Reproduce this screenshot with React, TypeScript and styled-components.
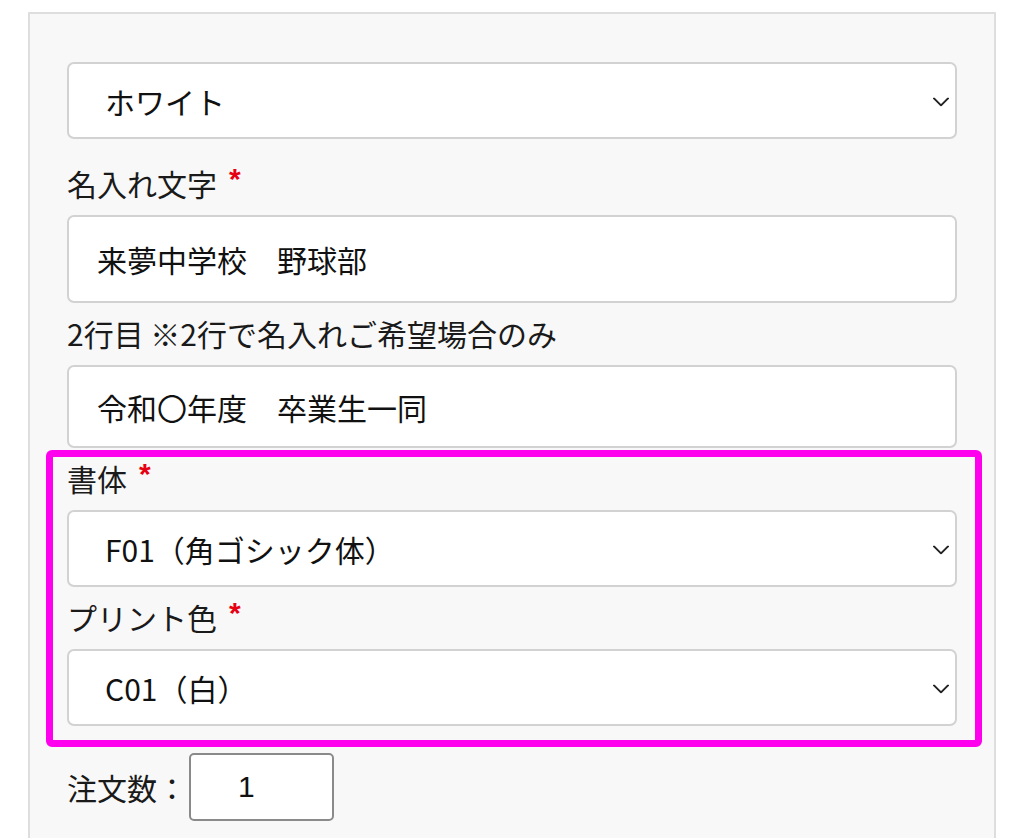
import * as React from "react";
import styled, { createGlobalStyle } from "styled-components";

//styles
const GlobalStyle = createGlobalStyle`
  html, body {
    margin: 0;
    padding: 0;
    background: #ffffff;
    font-family: "Noto Sans CJK JP", "Noto Sans", sans-serif;
    color: #222222;
  }
`;

type FieldProps = {
  label: string;
  required?: boolean;
};

const Chevron = () => (
  <svg width="16" height="9" viewBox="0 0 16 9" fill="none">
    <path
      d="M1 1l7 7 7-7"
      stroke="#222"
      strokeWidth="2"
      strokeLinecap="round"
      strokeLinejoin="round"
    />
  </svg>
);

const Label: React.FC<FieldProps> = ({ label, required }) => (
  <LabelText>
    {label}
    {required && <Required>*</Required>}
  </LabelText>
);

const Select: React.FC<{ value: string; spaced?: boolean }> = ({
  value,
  spaced,
}) => (
  <SelectWrap $spaced={spaced}>
    <SelectBox defaultValue={value}>
      <option value={value}>{value}</option>
    </SelectBox>
    <ChevronSlot>
      <Chevron />
    </ChevronSlot>
  </SelectWrap>
);

const App: React.FC = () => {
  return (
    <Page>
      <GlobalStyle />
      <Panel>
        <Select value="ホワイト" spaced />

        <Label label="名入れ文字" required />
        <TextInput defaultValue="来夢中学校　野球部" $height={88} />

        <Label label="2行目 ※2行で名入れご希望場合のみ" />
        <TextInput defaultValue="令和〇年度　卒業生一同" $height={83} />

        <Highlight>
          <Label label="書体" required />
          <Select value="F01（角ゴシック体）" />

          <Label label="プリント色" required />
          <Select value="C01（白）" />
        </Highlight>

        <QuantityRow>
          <span>注文数：</span>
          <Quantity defaultValue="1" />
        </QuantityRow>
      </Panel>
    </Page>
  );
};

const Page = styled.div`
  padding: 12px 0 0 28px;
  height: 826px;
  overflow: hidden;
`;

const Panel = styled.div`
  width: 968px;
  min-height: 900px;
  box-sizing: border-box;
  border: 2px solid #dedede;
  border-bottom: none;
  background: #f8f8f8;
  padding: 48px 37px 0;
  display: flex;
  flex-direction: column;
`;

const LabelText = styled.div`
  font-size: 30px;
  line-height: 42px;
  padding: 9px 0 11px;
  color: #1a1a1a;
  display: flex;
  align-items: flex-start;
`;

const Required = styled.span`
  color: #e60012;
  font-family: "Liberation Sans", Arial, sans-serif;
  font-size: 30px;
  font-weight: 700;
  line-height: 30px;
  margin: 2px 0 0 12px;
`;

const SelectWrap = styled.div<{ $spaced?: boolean }>`
  position: relative;
  height: 77px;
  margin-bottom: ${(p) => (p.$spaced ? "14px" : "0")};
`;

const SelectBox = styled.select`
  appearance: none;
  width: 100%;
  height: 100%;
  box-sizing: border-box;
  border: 2px solid #d2d2d2;
  border-radius: 7px;
  background: #ffffff;
  padding: 0 60px 0 36px;
  font-family: "Noto Sans CJK JP", sans-serif;
  font-size: 30px;
  color: #111;
  outline: none;
`;

const ChevronSlot = styled.span`
  position: absolute;
  right: 8px;
  top: 50%;
  transform: translateY(-40%);
  display: flex;
  pointer-events: none;
`;

const TextInput = styled.input<{ $height: number }>`
  width: 100%;
  height: ${(p) => p.$height}px;
  box-sizing: border-box;
  border: 2px solid #d2d2d2;
  border-radius: 7px;
  background: #ffffff;
  padding: 0 28px;
  font-family: "Noto Sans CJK JP", sans-serif;
  font-size: 30px;
  color: #111;
  outline: none;
`;

const Highlight = styled.div`
  position: relative;

  &::after {
    content: "";
    position: absolute;
    top: 2px;
    left: -21px;
    right: -25px;
    bottom: -21px;
    border: 7px solid #ff00ee;
    border-radius: 6px;
    pointer-events: none;
  }
`;

const QuantityRow = styled.div`
  display: flex;
  align-items: center;
  margin-top: 27px;
  font-size: 30px;
  color: #1a1a1a;
`;

const Quantity = styled.input`
  width: 145px;
  height: 68px;
  margin-left: 2px;
  box-sizing: border-box;
  border: 2px solid #8a8a8a;
  border-radius: 5px;
  background: #ffffff;
  padding: 0 0 0 47px;
  font-family: "Liberation Sans", Arial, sans-serif;
  font-size: 30px;
  color: #111;
  outline: none;
`;

export default App;
